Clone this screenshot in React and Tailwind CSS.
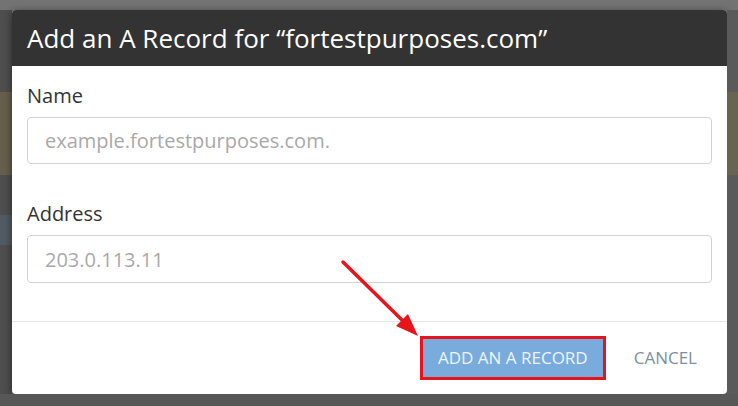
export default function App() {
  const font = { fontFamily: '"Open Sans", "Noto Sans", sans-serif' };
  return (
    <div className="relative w-[738px] h-[406px] bg-[#6c6c6c] flex flex-col overflow-hidden" style={font}>
      <div className="h-[10px] bg-[#737373]" />
      <div className="flex h-[384px]">
        <div className="w-[12px] flex flex-col bg-[#4e4e4e]">
          <div className="h-[82px]" />
          <div className="h-[83px] bg-[#675f4e]" />
          <div className="h-[40px]" />
          <div className="h-[30px] bg-[#525b63]" />
        </div>
        <div className="w-[715px] flex flex-col bg-white rounded-[4px] shadow-[0_2px_8px_rgba(0,0,0,0.5)] overflow-hidden">
          <div className="h-[56px] bg-[#333333] flex items-center px-[15px]">
            <h1 className="text-[26px] leading-[34px] text-white font-normal">
              Add an A Record for “fortestpurposes.com”
            </h1>
          </div>
          <div className="flex flex-col px-[15px] pt-[16px] pb-[38px] border-b border-[#e6e6e6]">
            <label className="text-[20px] leading-[28px] text-[#333333]">Name</label>
            <input
              className="mt-[7px] h-[47px] rounded-[4px] border-[1.5px] border-[#d3d3d3] px-[17px] text-[20px] text-[#333] placeholder:text-[#a9a9a9] outline-none"
              style={font}
              placeholder="example.fortestpurposes.com."
            />
            <label className="mt-[36px] text-[20px] leading-[28px] text-[#333333]">Address</label>
            <input
              className="mt-[7px] h-[48px] rounded-[4px] border-[1.5px] border-[#d3d3d3] px-[17px] text-[20px] text-[#333] placeholder:text-[#a9a9a9] outline-none"
              style={font}
              placeholder="203.0.113.11"
            />
          </div>
          <div className="flex-1 flex items-center justify-end pr-[30px] gap-[28px]">
            <div className="border-[3px] border-[#e8141c]">
              <button className="h-[38px] px-[15px] bg-[#79acdc] text-[17px] text-[#eef4fa] uppercase flex items-center" style={font}>
                Add an A Record
              </button>
            </div>
            <button className="text-[17px] text-[#7d8fa1] uppercase" style={font}>
              Cancel
            </button>
          </div>
        </div>
        <div className="w-[11px] flex flex-col bg-[#5a5a5a]">
          <div className="h-[82px]" />
          <div className="h-[83px] bg-[#69644f]" />
        </div>
      </div>
      <div className="flex-1 bg-[#575757]" />
      <svg className="absolute left-0 top-0 pointer-events-none" width="738" height="406">
        <line x1="343" y1="262" x2="404" y2="322" stroke="#e8141c" strokeWidth="3.5" strokeLinecap="round" />
        <polygon points="418,336 396,326 408,314" fill="#e8141c" />
      </svg>
    </div>
  );
}
